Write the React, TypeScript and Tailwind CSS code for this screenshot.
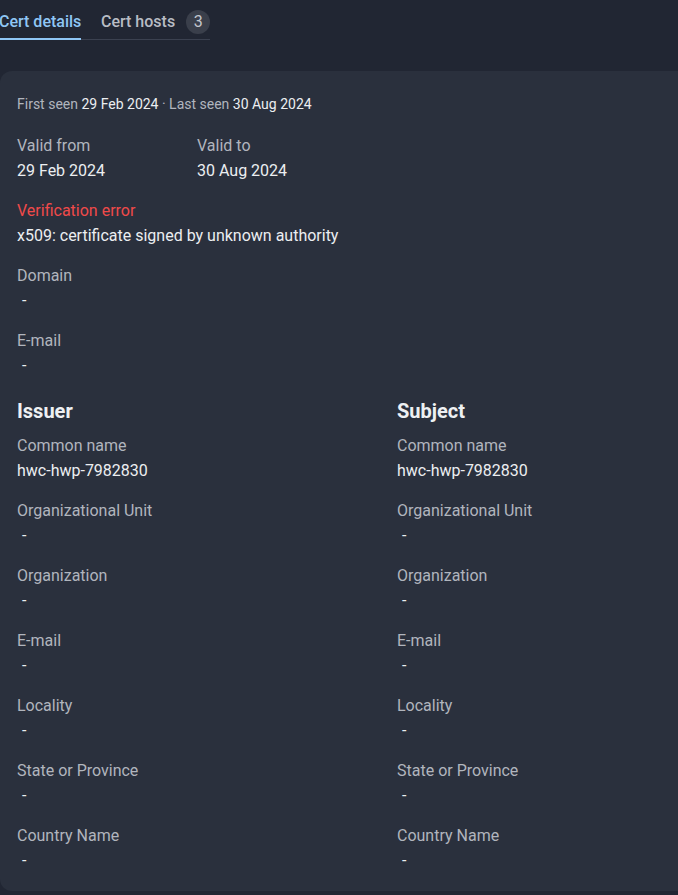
const fields = [
  "Common name",
  "Organizational Unit",
  "Organization",
  "E-mail",
  "Locality",
  "State or Province",
  "Country Name",
];

function Field({ label, value }: { label: string; value?: string }) {
  return (
    <div className="mb-[15px]">
      <div className="text-[16px] leading-[25px] text-[#b1b5bd]">{label}</div>
      {value ? (
        <div className="text-[16px] leading-[25px] text-[#eceef1]">{value}</div>
      ) : (
        <div className="pl-[5px] text-[16px] leading-[25px] text-[#eceef1]">-</div>
      )}
    </div>
  );
}

function Party({ title }: { title: string }) {
  return (
    <div className="w-[380px] shrink-0">
      <div className="mb-[8px] text-[20px] font-bold leading-[28px] text-[#eef0f3]">{title}</div>
      {fields.map((f) => (
        <Field key={f} label={f} value={f === "Common name" ? "hwc-hwp-7982830" : undefined} />
      ))}
    </div>
  );
}

export default function App() {
  return (
    <div
      className="min-h-[895px] w-[678px] overflow-hidden bg-[#212633] pb-[4px]"
      style={{ fontFamily: "Roboto, 'Liberation Sans', sans-serif" }}
    >
      <div className="flex h-[40px] w-[210px] items-stretch border-b border-[#3b4150]">
        <div className="relative flex w-[81px] items-center pt-[4px]">
          <span className="-ml-px whitespace-nowrap text-[16px] font-medium text-[#8fc6f5]">Cert details</span>
          <span className="absolute -bottom-px left-0 h-[2px] w-[81px] bg-[#8fc6f5]" />
        </div>
        <div className="ml-[20px] flex items-center gap-[11px] pt-[4px]">
          <span className="whitespace-nowrap text-[16px] font-medium text-[#b8bcc4]">Cert hosts</span>
          <span className="flex h-[24px] w-[24px] items-center justify-center rounded-full bg-[#3a3f4b] text-[16px] text-[#c3c7ce]">
            3
          </span>
        </div>
      </div>

      <div className="mt-[31px] w-[720px] rounded-l-[12px] bg-[#2a303d] pb-[3px] pl-[17px] pt-[24px]">
        <div className="text-[14px] leading-[18px] text-[#b1b5bd]">
          First seen <span className="text-[#eceef1]">29 Feb 2024</span> · Last seen{" "}
          <span className="text-[#eceef1]">30 Aug 2024</span>
        </div>

        <div className="mt-[19.5px] flex">
          <div className="w-[180px]">
            <Field label="Valid from" value="29 Feb 2024" />
          </div>
          <div className="w-[180px]">
            <Field label="Valid to" value="30 Aug 2024" />
          </div>
        </div>

        <div className="mb-[15px]">
          <div className="text-[16px] leading-[25px] text-[#f04a4a]">Verification error</div>
          <div className="text-[16px] leading-[25px] text-[#eceef1]">x509: certificate signed by unknown authority</div>
        </div>
        <Field label="Domain" />
        <Field label="E-mail" />

        <div className="mt-[19px] flex">
          <Party title="Issuer" />
          <Party title="Subject" />
        </div>
      </div>
    </div>
  );
}
